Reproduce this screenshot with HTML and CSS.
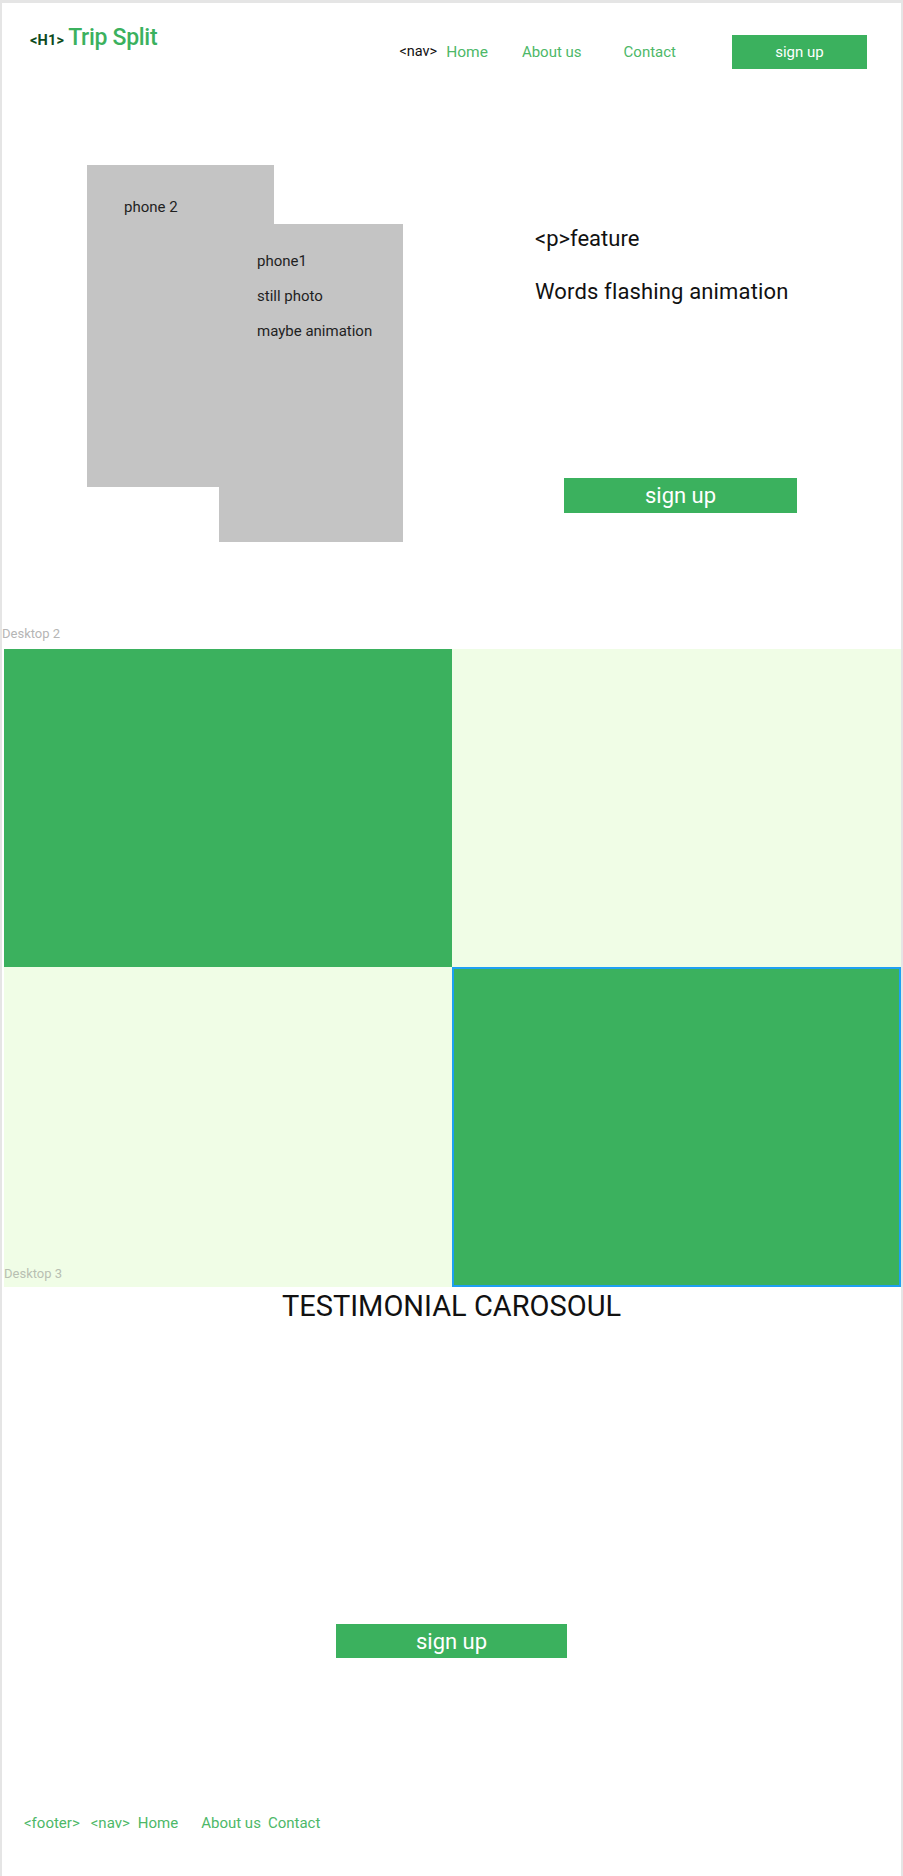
FILE: index.html
```html
<!DOCTYPE html>
<html>
<head>
<meta charset="utf-8">
<title>Trip Split</title>
<link rel="stylesheet" href="styles.css">
</head>
<body>
<div class="page">
  <header class="topbar">
    <div class="brand"><span class="tag">&lt;H1&gt;</span> <span class="logo">Trip Split</span></div>
    <nav class="nav">
      <span class="nav-tag">&lt;nav&gt;</span>
      <a class="nav-link home">Home</a>
      <a class="nav-link about">About us</a>
      <a class="nav-link contact">Contact</a>
      <a class="btn btn-small">sign up</a>
    </nav>
  </header>

  <section class="hero">
    <div class="phones">
      <div class="phone phone2"><p>phone 2</p></div>
      <div class="phone phone1">
        <p>phone1</p>
        <p>still photo</p>
        <p>maybe animation</p>
      </div>
    </div>
    <div class="copy">
      <p class="copy-line">&lt;p&gt;feature</p>
      <p class="copy-line second">Words flashing animation</p>
      <a class="btn btn-large hero-btn">sign up</a>
    </div>
  </section>

  <div class="frame-label">Desktop 2</div>

  <section class="grid">
    <div class="cell dark"></div>
    <div class="cell light"></div>
    <div class="cell light last-light"><span class="frame-label overlay">Desktop 3</span></div>
    <div class="cell dark selected"></div>
  </section>

  <h2 class="testimonial">TESTIMONIAL CAROSOUL</h2>

  <div class="cta">
    <a class="btn btn-large">sign up</a>
  </div>

  <footer class="footer">
    <span class="f-tag">&lt;footer&gt;</span>
    <span class="f-nav">&lt;nav&gt;</span>
    <a class="f-home">Home</a>
    <a class="f-about">About us</a>
    <a class="f-contact">Contact</a>
  </footer>
</div>
</body>
</html>
```

FILE: styles.css
```css
* { box-sizing: border-box; }

html, body {
  margin: 0;
  padding: 0;
}

body {
  background: #e5e5e5;
  font-family: Roboto, "Liberation Sans", Arial, sans-serif;
  color: #1a1a1a;
}

p { margin: 0; }

a { text-decoration: none; cursor: pointer; }

.page {
  margin: 3px 2px 0 2px;
  background: #ffffff;
  min-height: 1873px;
  width: 899px;
}

/* header */
.topbar {
  display: flex;
  align-items: flex-start;
  height: 86px;
}

.brand {
  margin-top: 22px;
  padding-left: 28px;
  line-height: 26px;
  white-space: nowrap;
}

.tag {
  font-size: 14.5px;
  font-weight: 700;
  color: #0d4a1c;
  letter-spacing: 0.2px;
}

.logo {
  font-size: 23px;
  font-weight: 500;
  color: #3bb15e;
  letter-spacing: -0.3px;
}

.nav {
  margin-left: auto;
  display: flex;
  align-items: flex-start;
  margin-right: 34px;
}

.nav-tag,
.nav-link {
  margin-top: 40px;
  font-size: 15px;
  line-height: 18px;
}

.nav-tag { color: #111; font-size: 14.5px; }

.nav-link { color: #4db868; }

.home { margin-left: 9px; font-size: 15.5px; }
.about { margin-left: 34px; }
.contact { margin-left: 42px; }

.btn {
  display: flex;
  align-items: center;
  justify-content: center;
  background: #3bb15e;
  color: #ffffff;
}

.btn-small {
  margin-top: 32px;
  margin-left: 56px;
  width: 135px;
  height: 34px;
  font-size: 15px;
}

.btn-large {
  width: 233px;
  height: 35px;
  font-size: 22px;
}

/* hero */
.hero {
  display: flex;
  height: 531px;
}

.phones {
  position: relative;
  width: 531px;
  flex: none;
}

.phone {
  position: absolute;
  background: #c4c4c4;
  font-size: 15px;
  line-height: 18px;
  color: #1f1f1f;
}

.phone2 {
  left: 85px;
  top: 76px;
  width: 187px;
  height: 322px;
  padding: 33px 0 0 37px;
}

.phone1 {
  left: 217px;
  top: 135px;
  width: 184px;
  height: 318px;
  padding: 28px 0 0 38px;
  display: flex;
  flex-direction: column;
  gap: 17px;
}

.copy {
  padding-top: 137px;
  padding-left: 2px;
}

.copy-line {
  font-size: 22px;
  line-height: 26px;
  color: #111;
}

.copy-line.second {
  margin-top: 27px;
  letter-spacing: 0.15px;
}

.hero-btn {
  margin-top: 173px;
  margin-left: 29px;
}

/* desktop frames */
.frame-label {
  font-size: 13px;
  line-height: 20px;
  color: #b5b5b5;
  height: 29px;
  padding-top: 4px;
}

.grid {
  display: grid;
  grid-template-columns: 448px 449px;
  grid-template-rows: 318px 320px;
  margin-left: 2px;
}

.cell.dark { background: #3bb15e; }
.cell.light { background: #f0fde6; }

.cell.last-light { position: relative; }

.cell.selected {
  border: 2px solid #1ea0f2;
}

.frame-label.overlay {
  position: absolute;
  left: 0;
  bottom: 3px;
  height: auto;
  padding: 0;
  color: #b8bfb2;
}

/* testimonial */
.testimonial {
  margin: 3px 0 0 0;
  text-align: center;
  font-size: 29px;
  line-height: 32px;
  font-weight: 400;
  color: #111;
}

.cta {
  display: flex;
  justify-content: center;
  margin-top: 302px;
}

.cta .btn-large {
  width: 231px;
  height: 34px;
}

/* footer */
.footer {
  display: flex;
  align-items: baseline;
  margin-top: 156px;
  padding-left: 22px;
  font-size: 15px;
  line-height: 18px;
  color: #4db868;
}

.f-nav { margin-left: 11px; font-size: 15px; }
.f-home { margin-left: 8px; color: #4db868; }
.f-about { margin-left: 23px; color: #4db868; }
.f-contact { margin-left: 7px; color: #4db868; }
```
